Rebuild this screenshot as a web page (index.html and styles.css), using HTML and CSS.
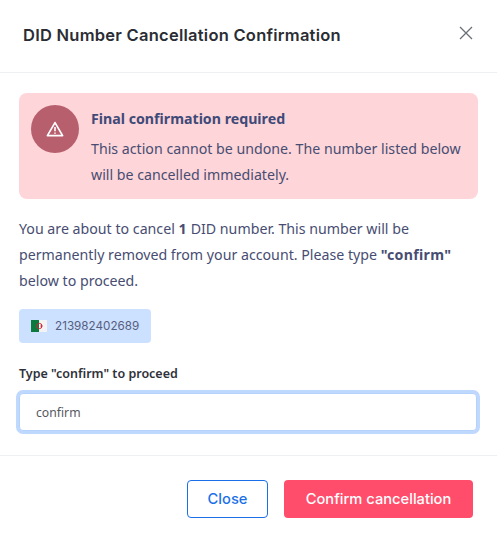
FILE: index.html
```html
<!DOCTYPE html>
<html>
<head>
    <title>DID Number Cancellation Confirmation</title>
    <link rel="stylesheet" href="styles.css">
</head>
<body>

<div class="modal">
    <div class="modal-header">
        <h2 class="modal-title">DID Number Cancellation Confirmation</h2>
        <svg class="close-icon" width="14" height="14" viewBox="0 0 14 14">
            <path d="M1 1L13 13M13 1L1 13" stroke="#6b6f76" stroke-width="1.3" fill="none"/>
        </svg>
    </div>

    <div class="modal-body">
        <div class="alert">
            <div class="alert-icon">
                <svg width="18" height="16" viewBox="0 0 18 16">
                    <path d="M9 1.6L16.6 14.6H1.4Z" stroke="#fff" stroke-width="1.7" stroke-linejoin="round" fill="none"/>
                    <path d="M9 6V10.2M9 11.4V12.8" stroke="#fff" stroke-width="1.6" fill="none"/>
                </svg>
            </div>
            <div class="alert-text">
                <div class="alert-title">Final confirmation required</div>
                <div>This action cannot be undone. The number listed below will be cancelled immediately.</div>
            </div>
        </div>

        <p class="intro">You are about to cancel <b>1</b> DID number. This number will be permanently removed from your account. Please type <b>"confirm"</b> below to proceed.</p>

        <div class="chip">
            <svg class="flag" width="16" height="12" viewBox="0 0 16 12">
                <rect width="8" height="12" fill="#0c7a3e"/>
                <rect x="8" width="8" height="12" fill="#f3f3f3"/>
                <circle cx="8.4" cy="6" r="2.6" fill="none" stroke="#d2213a" stroke-width="1"/>
                <circle cx="10.4" cy="6" r="0.9" fill="#d2213a"/>
            </svg>
            <span>213982402689</span>
        </div>

        <label class="field-label" for="confirm-input">Type "confirm" to proceed</label>
        <input class="field-input" id="confirm-input" type="text" value="confirm">
    </div>

    <div class="modal-footer">
        <button class="btn btn-close">Close</button>
        <button class="btn btn-danger">Confirm cancellation</button>
    </div>
</div>

</body>
</html>
```

FILE: styles.css
```css
body {
    margin: 0;
    background-color: #fff;
    font-family: "Noto Sans", sans-serif;
    color: #474d72;
}

.modal {
    width: 497px;
    height: 539px;
    box-sizing: border-box;
}

.modal-header {
    height: 73px;
    box-sizing: border-box;
    border-bottom: 1px solid #eef0f4;
    padding: 0 23px 3px;
    display: flex;
    align-items: center;
    justify-content: space-between;
}

.modal-title {
    margin: 0;
    font-family: Inter, sans-serif;
    font-size: 16.5px;
    letter-spacing: 0.25px;
    font-weight: 600;
    color: #2a2d34;
}

.close-icon {
    margin-right: 1px;
    margin-bottom: 3px;
}

.modal-body {
    padding: 20px 19px 0;
    height: 383px;
    box-sizing: border-box;
    border-bottom: 1px solid #eef0f2;
}

.alert {
    display: flex;
    gap: 12px;
    padding: 12px;
    height: 106px;
    box-sizing: border-box;
    background-color: #fed5d9;
    border-radius: 8px;
    font-size: 14.2px;
    line-height: 26px;
}

.alert-icon {
    width: 48px;
    height: 48px;
    flex-shrink: 0;
    border-radius: 50%;
    background-color: #b85f6e;
    display: flex;
    align-items: center;
    justify-content: center;
}

.alert-title {
    margin-top: 1px;
    margin-bottom: 4px;
    font-weight: 700;
    color: #3f4a78;
}

.intro {
    margin: 17px 0 0;
    font-size: 14.2px;
    line-height: 26px;
}

.intro b {
    letter-spacing: 0.3px;
}

.chip {
    margin-top: 15px;
    width: 132px;
    height: 34px;
    box-sizing: border-box;
    padding-left: 12px;
    display: flex;
    align-items: center;
    gap: 8px;
    background-color: #cce0ff;
    border-radius: 4px;
    font-family: Inter, sans-serif;
    font-size: 11.7px;
    color: #565e7e;
}

.field-label {
    display: block;
    margin-top: 22px;
    font-size: 12.5px;
    font-weight: 600;
    line-height: 18px;
    color: #2f323a;
}

.field-input {
    display: block;
    width: 458px;
    height: 38px;
    margin-top: 10px;
    box-sizing: border-box;
    padding: 0 16px;
    border: 1px solid #b5d2fb;
    border-radius: 4px;
    outline: none;
    box-shadow: 0 0 0 3px #bfd8fd;
    font-family: "Noto Sans", sans-serif;
    font-size: 12.2px;
    color: #55585f;
}

.modal-footer {
    display: flex;
    justify-content: flex-end;
    gap: 16px;
    padding: 24px 24px 0;
}

.btn {
    height: 38px;
    border-radius: 4px;
    font-family: Inter, sans-serif;
    font-size: 14.7px;
    font-weight: 500;
    cursor: pointer;
}

.btn-close {
    width: 81px;
    background-color: #fff;
    border: 1px solid #1a6fe8;
    color: #1a6fe8;
}

.btn-danger {
    width: 189px;
    background-color: #ff4d6b;
    border: none;
    color: #fff;
}
```
